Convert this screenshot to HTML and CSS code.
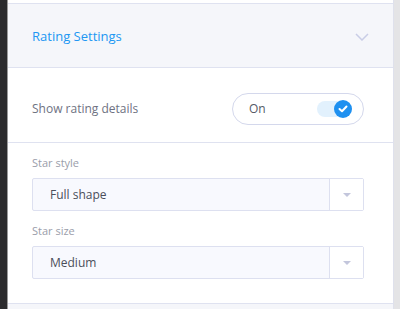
FILE: index.html
```html
<!DOCTYPE html>
<html lang="en">
<head>
    <meta charset="UTF-8">
    <title>Rating Settings</title>
    <link rel="stylesheet" href="styles.css">
</head>
<body>
    <div class="frame">
        <div class="edge-left"></div>
        <div class="panel">
            <div class="top-gap"></div>
            <header class="section-head">
                <h2>Rating Settings</h2>
                <svg class="chevron" width="14" height="8" viewBox="0 0 14 8">
                    <path d="M1 1 L7 7 L13 1" fill="none" stroke="#c9cde6" stroke-width="1.5"/>
                </svg>
            </header>

            <div class="row toggle-row">
                <span class="row-label">Show rating details</span>
                <div class="toggle">
                    <span class="toggle-text">On</span>
                    <span class="switch">
                        <span class="knob">
                            <svg width="10" height="8" viewBox="0 0 10 8">
                                <path d="M1.5 4 L4 6.3 L8.5 1.5" fill="none" stroke="#fff" stroke-width="2" stroke-linecap="round" stroke-linejoin="round"/>
                            </svg>
                        </span>
                    </span>
                </div>
            </div>

            <div class="fields">
                <label class="field-label">Star style</label>
                <div class="select">
                    <span class="select-value">Full shape</span>
                    <span class="select-arrow"><i></i></span>
                </div>
                <label class="field-label">Star size</label>
                <div class="select">
                    <span class="select-value">Medium</span>
                    <span class="select-arrow"><i></i></span>
                </div>
            </div>
            <div class="bottom"></div>
        </div>
        <div class="edge-right"></div>
    </div>
</body>
</html>
```

FILE: styles.css
```css
body {
    margin: 0;
    font-family: 'Open Sans', sans-serif;
    background: #fff;
    color: #6b6f80;
}

.frame {
    display: flex;
    height: 309px;
    overflow: hidden;
}

.edge-left {
    width: 7px;
    background: #2b2b2d;
    border-right: 1px solid #9a9a9a;
}

.edge-right {
    width: 6px;
    background: #e4e4e6;
}

.panel {
    flex: 1;
    display: flex;
    flex-direction: column;
    background: #fff;
    border-right: 1px solid #dfe1ec;
}

.top-gap {
    height: 3px;
    border-bottom: 1px solid #dfe2f0;
}

.section-head {
    height: 63px;
    flex-shrink: 0;
    background: #f5f6fa;
    border-bottom: 1px solid #dfe2f0;
    display: flex;
    align-items: center;
    justify-content: space-between;
    padding: 0 24px 0 24px;
}

.section-head h2 {
    margin: 0;
    font-size: 13px;
    font-weight: 400;
    color: #2196f3;
}

.chevron {
    margin-top: 3px;
}

.row {
    display: flex;
    flex-shrink: 0;
    align-items: center;
    justify-content: space-between;
    padding: 7px 29px 0 24px;
    height: 75px;
    box-sizing: border-box;
    border-bottom: 1px solid #dfe2f0;
}

.row-label {
    font-size: 12px;
    color: #6e7282;
}

.toggle {
    width: 132px;
    height: 32px;
    border: 1px solid #d4d8ec;
    border-radius: 16px;
    display: flex;
    align-items: center;
    justify-content: space-between;
    padding: 0 12px 0 16px;
    box-sizing: border-box;
}

.toggle-text {
    font-size: 12px;
    color: #555a66;
}

.switch {
    position: relative;
    width: 34px;
    height: 16px;
    border-radius: 8px;
    background: #e2f1fd;
}

.knob {
    position: absolute;
    right: -1px;
    top: -1px;
    width: 18px;
    height: 18px;
    border-radius: 50%;
    background: #1e90f0;
    display: flex;
    align-items: center;
    justify-content: center;
}

.fields {
    flex: 1;
    padding: 13px 29px 0 24px;
    display: flex;
    flex-direction: column;
    border-bottom: 1px solid #dfe2f0;
}

.field-label {
    font-size: 11px;
    color: #9a9daa;
    margin-bottom: 8px;
    line-height: 14px;
}

.select {
    height: 33px;
    flex-shrink: 0;
    border: 1px solid #dde0f0;
    border-radius: 2px;
    display: flex;
    box-sizing: border-box;
    margin-bottom: 13px;
    background: #f8f9fe;
}

.select-value {
    flex: 1;
    display: flex;
    align-items: center;
    padding-left: 17px;
    font-size: 12px;
    color: #4a4e5a;
}

.select-arrow {
    width: 33px;
    border-left: 1px solid #dde0f0;
    background: #fff;
    display: flex;
    align-items: center;
    justify-content: center;
}

.select-arrow i {
    width: 0;
    height: 0;
    border-left: 4px solid transparent;
    border-right: 4px solid transparent;
    border-top: 4px solid #c3c6dc;
}

.bottom {
    height: 5px;
    flex-shrink: 0;
    background: #f5f6fa;
}
```
